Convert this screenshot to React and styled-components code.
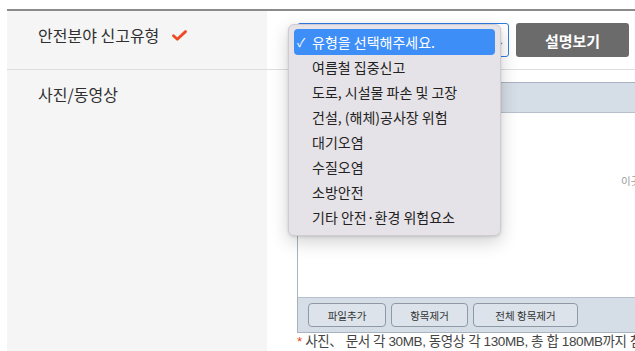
import styled, { createGlobalStyle } from "styled-components";

const GlobalStyle = createGlobalStyle`
  html, body {
    margin: 0;
    padding: 0;
    background: #fff;
    overflow: hidden;
  }
  body {
    font-family: "Noto Sans CJK KR", "Noto Sans", sans-serif;
    color: #333;
  }
`;

const Page = styled.div`
  padding: 9px 0 0 7px;
  width: 1000px;
`;

const FormTable = styled.div`
  border-top: 2px solid #8b8b8b;
`;

const Row = styled.div`
  display: grid;
  grid-template-columns: 260px 1fr;
  border-bottom: ${(p) => (p.$last ? "none" : "1px solid #dedede")};
  min-height: ${(p) => p.$height || "auto"};
`;

const Label = styled.div`
  background: #f5f5f5;
  padding: 13px 0 0 31px;
  font-size: 16px;
  line-height: 22px;
  color: #2f2f2f;
  display: flex;
  align-items: flex-start;
  gap: 13px;
`;

const Field = styled.div`
  padding: 12px 0 0 30px;
  display: flex;
  flex-direction: column;
  align-items: flex-start;
`;

const SelectRow = styled.div`
  display: flex;
  gap: 7px;
`;

const SelectWrap = styled.div`
  position: relative;
`;

const SelectBox = styled.div`
  box-sizing: border-box;
  width: 212px;
  height: 34px;
  border: 1px solid #2f7de1;
  border-radius: 3px;
  background: #fff;
  display: flex;
  align-items: center;
  justify-content: flex-end;
  padding-right: 4px;
  font-size: 10px;
  color: #555;
`;

const Dropdown = styled.ul`
  position: absolute;
  left: -9px;
  top: 1px;
  box-sizing: border-box;
  width: 213px;
  margin: 0;
  padding: 4px 5px 5px;
  list-style: none;
  background: #e6e3e8;
  border: 1px solid #cfcbd2;
  border-radius: 6px;
  box-shadow: 0 6px 18px rgba(0, 0, 0, 0.18), 0 1px 3px rgba(0, 0, 0, 0.12);
  z-index: 10;
`;

const Option = styled.li`
  box-sizing: border-box;
  height: ${(p) => (p.$selected ? "26px" : "25px")};
  line-height: ${(p) => (p.$selected ? "26px" : "25px")};
  padding-left: 18px;
  position: relative;
  border-radius: 4px;
  font-size: 14px;
  color: ${(p) => (p.$selected ? "#fff" : "#222")};
  background: ${(p) => (p.$selected ? "#3d8ef7" : "transparent")};
  white-space: nowrap;
`;

const Tick = styled.span`
  position: absolute;
  left: 3px;
  top: 0;
  font-size: 12px;
`;

const DarkButton = styled.button`
  width: 113px;
  height: 34px;
  border: none;
  border-radius: 3px;
  background: #6b6b6b;
  color: #fff;
  font-family: inherit;
  font-size: 15px;
  font-weight: 700;
  cursor: pointer;
`;

const Uploader = styled.div`
  width: 700px;
  border: 1px solid #a9b3c0;
  border-right: none;
`;

const UploaderHead = styled.div`
  height: 29px;
  background: #d5dde6;
  border-bottom: 1px solid #b6c0cc;
`;

const DropArea = styled.div`
  height: 184px;
  background: #fff;
  box-sizing: border-box;
  padding: 60px 0 0 323px;
  font-size: 10.5px;
  color: #999;
  white-space: nowrap;
`;

const Toolbar = styled.div`
  height: 35px;
  background: #d5dde6;
  border-top: 1px solid #b6c0cc;
  box-sizing: border-box;
  display: flex;
  align-items: center;
  gap: 5px;
  padding-left: 10px;
`;

const ToolButton = styled.button`
  height: 24px;
  width: ${(p) => p.$w}px;
  border: 1px solid #8f99a6;
  border-radius: 4px;
  background: #dce3eb;
  font-family: inherit;
  font-size: 10.5px;
  color: #333;
  padding: 0;
`;

const Note = styled.p`
  margin: 0;
  font-family: "Liberation Sans", "Noto Sans CJK KR", sans-serif;
  font-size: 13.5px;
  line-height: 18px;
  color: #444;
  white-space: nowrap;
  letter-spacing: -0.4px;
`;

const Star = styled.span`
  color: #e8431d;
`;

const options = [
  "여름철 집중신고",
  "도로, 시설물 파손 및 고장",
  "건설, (해체)공사장 위험",
  "대기오염",
  "수질오염",
  "소방안전",
  "기타 안전·환경 위험요소",
];

function CheckMark() {
  return (
    <svg width="15" height="11" viewBox="0 0 15 11" style={{ marginTop: 6 }}>
      <path
        d="M1.5 5.8 L5.3 9.2 L13.5 1.6"
        fill="none"
        stroke="#ef4a22"
        strokeWidth="2.8"
        strokeLinecap="round"
        strokeLinejoin="round"
      />
    </svg>
  );
}

export default function App() {
  return (
    <Page>
      <GlobalStyle />
      <FormTable>
        <Row $height="58px">
          <Label>
            안전분야 신고유형
            <CheckMark />
          </Label>
          <Field>
            <SelectRow>
              <SelectWrap>
                <SelectBox>⌄</SelectBox>
                <Dropdown>
                  <Option $selected>
                    <Tick>✓</Tick>유형을 선택해주세요.
                  </Option>
                  {options.map((o) => (
                    <Option key={o}>{o}</Option>
                  ))}
                </Dropdown>
              </SelectWrap>
              <DarkButton>설명보기</DarkButton>
            </SelectRow>
          </Field>
        </Row>
        <Row $last $height="290px">
          <Label>사진/동영상</Label>
          <Field>
            <Uploader>
              <UploaderHead />
              <DropArea>이곳에 파일을 끌어다 놓으세요.</DropArea>
              <Toolbar>
                <ToolButton $w={78}>파일추가</ToolButton>
                <ToolButton $w={77}>항목제거</ToolButton>
                <ToolButton $w={105}>전체 항목제거</ToolButton>
              </Toolbar>
            </Uploader>
            <Note>
              <Star>*</Star> 사진、 문서 각 30MB, 동영상 각 130MB, 총 합 180MB까지 첨부 가능합니다.
            </Note>
          </Field>
        </Row>
      </FormTable>
    </Page>
  );
}
